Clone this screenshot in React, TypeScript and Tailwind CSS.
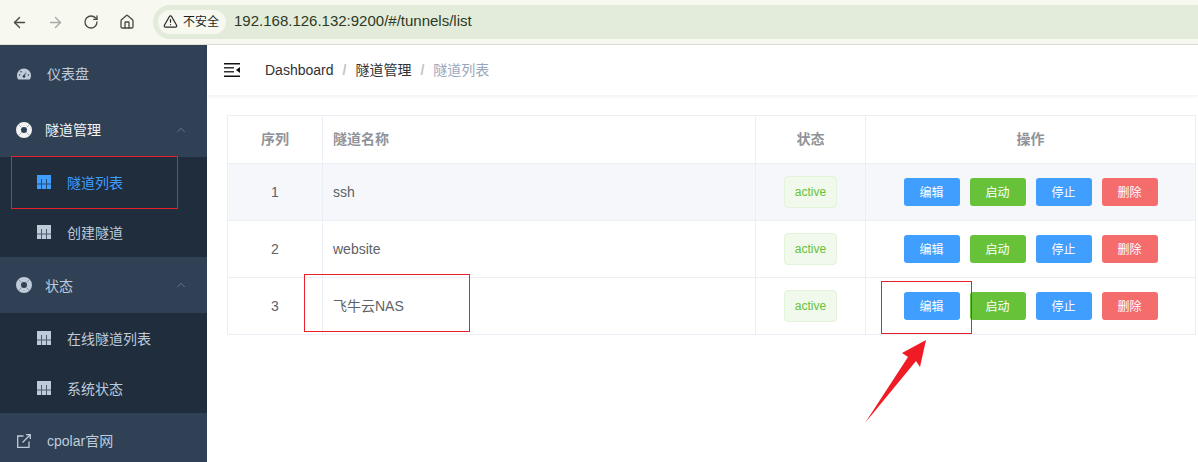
import React from "react";
import { ArrowLeft, ArrowRight, RotateCw, House, TriangleAlert, ChevronUp } from "lucide-react";

const FONT = "font-['Liberation_Sans','Noto_Sans_CJK_SC',sans-serif]";

function GaugeIcon() {
  return (
    <svg viewBox="0 0 14 12" className="h-[12px] w-[14px] shrink-0" fill="#bfcbd9">
      <path d="M7 0.5a7 7 0 0 0-7 7c0 1.6.5 3 1.4 4h11.2c.9-1 1.4-2.4 1.4-4a7 7 0 0 0-7-7z" />
      <path d="M7.6 8.2 9.6 3.6 6.5 7.4z" fill="#304156" />
      <circle cx="7" cy="8.4" r="1.3" fill="#304156" />
      <circle cx="2.6" cy="7" r=".8" fill="#304156" />
      <circle cx="4" cy="3.8" r=".8" fill="#304156" />
      <circle cx="11.4" cy="7" r=".8" fill="#304156" />
    </svg>
  );
}

function RingIcon({ color }: { color: string }) {
  return (
    <svg viewBox="0 0 16 16" className="h-4 w-4 shrink-0">
      <circle cx="8" cy="8" r="5.5" fill="none" stroke={color} strokeWidth="5" />
      <path d="M2.5 2.5l3 3M13.5 2.5l-3 3M2.5 13.5l3-3M13.5 13.5l-3-3" stroke="#304156" strokeWidth=".8" opacity=".45" />
    </svg>
  );
}

function TableIcon({ color }: { color: string }) {
  return (
    <svg viewBox="0 0 14 14" className="h-[14px] w-[14px] shrink-0" fill={color}>
      <rect x="0" y="0" width="14" height="14" />
      <path d="M4.5 4v10M9.5 4v10M0 9h14" stroke="#1f2d3d" strokeWidth="1" opacity=".7" />
    </svg>
  );
}

function MenuHead({ label, color, tall }: { label: string; color: string; tall?: boolean }) {
  return (
    <div className={`flex items-center bg-[#304156] pl-4 pr-[19px] ${tall ? "h-[56px]" : "h-[55px]"}`}>
      <RingIcon color={color} />
      <span className={`ml-[13px] flex-1 text-sm ${tall ? "pt-[2px]" : ""}`} style={{ color }}>{label}</span>
      <ChevronUp className="h-[14px] w-[14px] text-[#7b8a9b]" strokeWidth={1.25} />
    </div>
  );
}

function SubItem({ label, active }: { label: string; active?: boolean }) {
  return (
    <div className="flex h-[50px] items-center bg-[#1f2d3d] pl-[37px]">
      <TableIcon color={active ? "#409eff" : "#bfcbd9"} />
      <span className={`ml-4 pt-[2px] text-sm ${active ? "text-[#409eff]" : "text-[#bfcbd9]"}`}>{label}</span>
    </div>
  );
}

function Btn({ label, color }: { label: string; color: string }) {
  return (
    <button className={`flex h-7 w-14 items-center justify-center rounded-[3px] pt-[2px] text-xs text-white ${color}`}>
      {label}
    </button>
  );
}

const ROWS = [
  { id: 1, name: "ssh", striped: true },
  { id: 2, name: "website", striped: false },
  { id: 3, name: "飞牛云NAS", striped: false },
];

export default function App() {
  return (
    <div className={`relative flex h-[462px] w-[1198px] flex-col overflow-hidden bg-white ${FONT}`}>
      {/* browser bar */}
      <div className="flex h-[45px] shrink-0 items-center border-b border-[#dfe1d8] bg-[#f7f9f0] pl-[11px]">
        <ArrowLeft className="h-[17px] w-[17px] text-[#474c43]" strokeWidth={2} />
        <ArrowRight className="ml-[19px] h-[17px] w-[17px] text-[#a8aba3]" strokeWidth={2} />
        <RotateCw className="ml-[19px] h-[16px] w-[16px] text-[#474c43]" strokeWidth={2} />
        <House className="ml-[20px] h-[16px] w-[16px] text-[#474c43]" strokeWidth={2} />
        <div className="ml-[18px] mt-[-1px] flex h-[34px] flex-1 items-center rounded-l-full bg-[#e3ebda] pl-[5px]">
          <div className="flex h-[24px] w-[68px] items-center gap-[5px] rounded-full bg-[#f7f9f0] pl-[5px] text-xs text-[#1f1f1f]">
            <TriangleAlert className="h-[15px] w-[15px] text-[#2a2a2a]" strokeWidth={2} />
            不安全
          </div>
          <span className="ml-2 text-[15px] text-[#2b3a25]">192.168.126.132:9200/#/tunnels/list</span>
        </div>
      </div>

      <div className="flex flex-1">
        {/* sidebar */}
        <aside className="flex w-[207px] shrink-0 flex-col bg-[#304156]">
          <div className="flex h-[57px] items-center pl-[17px]">
            <GaugeIcon />
            <span className="ml-[16px] text-sm text-[#bfcbd9]">仪表盘</span>
          </div>
          <MenuHead label="隧道管理" color="#f4f4f5" />
          <SubItem label="隧道列表" active />
          <SubItem label="创建隧道" />
          <MenuHead label="状态" color="#bfcbd9" tall />
          <SubItem label="在线隧道列表" />
          <SubItem label="系统状态" />
          <div className="flex h-[56px] shrink-0 items-center pl-[17px]">
            <svg viewBox="0 0 14 14" className="h-[14px] w-[14px] shrink-0" fill="none" stroke="#bfcbd9" strokeWidth="1.3">
              <path d="M6.5 2H.7v11.3H12V7.5" />
              <path d="M5.5 8.5 13 1M9 .7h4.3V5" />
            </svg>
            <span className="ml-4 text-sm text-[#bfcbd9]">cpolar官网</span>
          </div>
        </aside>

        {/* main */}
        <main className="flex flex-1 flex-col">
          <div className="flex h-[50px] items-center pl-[17px] shadow-[0_1px_4px_rgba(0,21,41,0.08)]">
            <svg viewBox="0 0 16 14" className="h-[14px] w-[16px] shrink-0">
              <rect x="0" y="0" width="16" height="1.5" fill="#111" />
              <rect x="0" y="4" width="10" height="1.5" fill="#333" />
              <rect x="0" y="8" width="10" height="1.5" fill="#333" />
              <rect x="0" y="12.5" width="16" height="1.5" fill="#111" />
              <path d="M16 4v6L12 7z" fill="#111" />
            </svg>
            <div className="ml-[25px] flex items-center text-sm">
              <span className="text-[#303133]">Dashboard</span>
              <span className="mx-[9px] font-bold text-[#c0c4cc]">/</span>
              <span className="text-[#303133]">隧道管理</span>
              <span className="mx-[9px] font-bold text-[#c0c4cc]">/</span>
              <span className="text-[#97a8be]">隧道列表</span>
            </div>
          </div>

          <div className="pt-5 pl-5 pr-[2px]">
            <table className="w-[969px] table-fixed border-collapse text-sm text-[#606266]">
              <thead>
                <tr className="h-[48px] text-[#909399]">
                  <th className="w-[95px] border border-[#ebeef5] pb-[2px] font-bold">序列</th>
                  <th className="w-[433px] border border-[#ebeef5] pb-[2px] pl-[10px] text-left font-bold">隧道名称</th>
                  <th className="w-[110px] border border-[#ebeef5] pb-[2px] font-bold">状态</th>
                  <th className="border border-[#ebeef5] pb-[2px] font-bold">操作</th>
                </tr>
              </thead>
              <tbody>
                {ROWS.map((row) => (
                  <tr key={row.id} className={`h-[57px] ${row.striped ? "bg-[#f5f7fa]" : ""}`}>
                    <td className="border border-[#ebeef5] text-center">{row.id}</td>
                    <td className="border border-[#ebeef5] pl-[10px]">{row.name}</td>
                    <td className="border border-[#ebeef5]">
                      <span className="mx-auto flex h-8 w-[53px] items-center justify-center rounded border border-[#e1f3d8] bg-[#f0f9eb] text-xs text-[#67c23a]">
                        active
                      </span>
                    </td>
                    <td className="border border-[#ebeef5]">
                      <div className="flex justify-center gap-[10px]">
                        <Btn label="编辑" color="bg-[#409eff]" />
                        <Btn label="启动" color="bg-[#67c23a]" />
                        <Btn label="停止" color="bg-[#409eff]" />
                        <Btn label="删除" color="bg-[#f56c6c]" />
                      </div>
                    </td>
                  </tr>
                ))}
              </tbody>
            </table>
          </div>
        </main>
      </div>

      {/* annotations drawn over the screenshot */}
      <div className="absolute left-[11px] top-[156px] h-[53px] w-[167px] border border-[#e8202a]" />
      <div className="absolute left-[304px] top-[274px] h-[58px] w-[166px] border border-[#e8202a]" />
      <div className="absolute left-[881px] top-[281px] h-[53px] w-[91px] border border-[#e8202a]" />
      <svg className="absolute left-[860px] top-[335px] h-[95px] w-[70px]" viewBox="0 0 70 95">
        <polygon points="5,88 48,22 42,18 66,5 60,32 56,26" fill="#ef1c25" />
      </svg>
    </div>
  );
}
